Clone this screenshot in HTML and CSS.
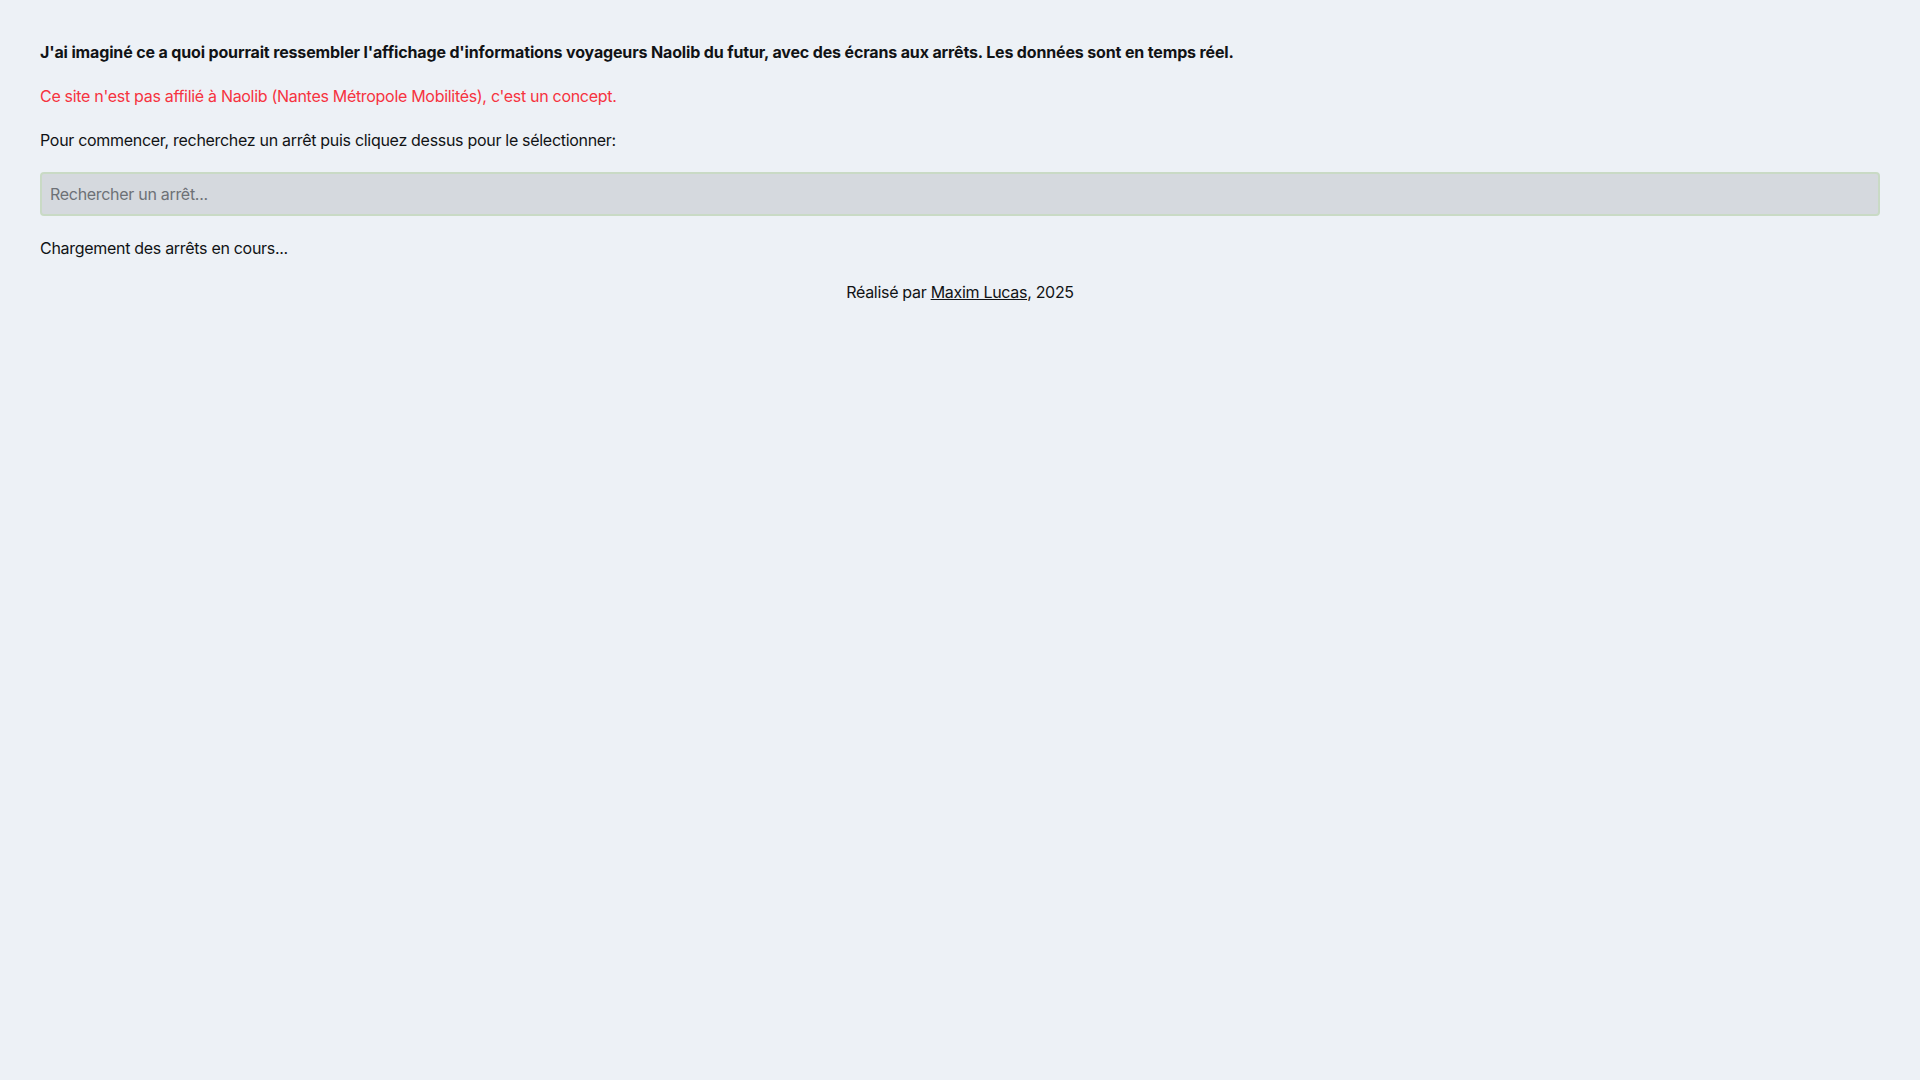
FILE: index.html
```html
<!DOCTYPE html>
<html lang="fr">
<head>
<meta charset="utf-8">
<title>Naolib du futur</title>
<link rel="stylesheet" href="styles.css">
</head>
<body>
<main class="page">
  <p class="intro">J'ai imaginé ce a quoi pourrait ressembler l'affichage d'informations voyageurs Naolib du futur, avec des écrans aux arrêts. Les données sont en temps réel.</p>
  <p class="warning">Ce site n'est pas affilié à Naolib (Nantes Métropole Mobilités), c'est un concept.</p>
  <p class="text">Pour commencer, recherchez un arrêt puis cliquez dessus pour le sélectionner:</p>
  <div class="search">
    <input class="search-input" type="text" placeholder="Rechercher un arrêt...">
  </div>
  <p class="text">Chargement des arrêts en cours...</p>
  <footer class="footer">Réalisé par <a class="footer-link" href="#">Maxim Lucas</a>, 2025</footer>
</main>
</body>
</html>
```

FILE: styles.css
```css
html, body {
  margin: 0;
  padding: 0;
  background: #edf1f6;
}

body {
  font-family: "Inter", "Noto Sans", sans-serif;
  font-size: 16px;
  letter-spacing: -0.3px;
  color: #111315;
}

.page {
  padding: 38px 40px;
}

.page p {
  margin: 0 0 16px;
  line-height: 28px;
}

.intro {
  font-weight: 700;
  letter-spacing: -0.15px;
}

.warning {
  color: #f6333f;
}

.search {
  margin: 18px 0;
}

.search-input {
  display: block;
  box-sizing: border-box;
  width: 100%;
  height: 44px;
  padding: 0 8px;
  border: 2px solid #c9dac5;
  border-radius: 4px;
  background: #d5d9de;
  font-family: inherit;
  font-size: 16px;
  letter-spacing: -0.3px;
  color: #111315;
  outline: none;
}

.search-input::placeholder {
  color: #6d7176;
}

.footer {
  text-align: center;
  line-height: 28px;
}

.footer-link {
  color: #111315;
  text-decoration: underline;
}
```
